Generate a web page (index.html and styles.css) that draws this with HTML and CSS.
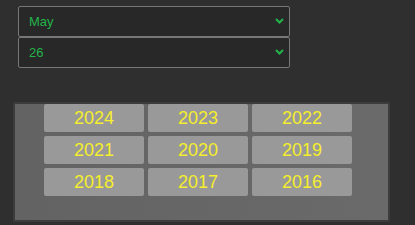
FILE: index.html
```html
<!DOCTYPE html>
<html lang="en">
<head>
<meta charset="utf-8">
<title>Date picker</title>
<link rel="stylesheet" href="styles.css">
</head>
<body>
<div class="pickers">
	<div class="dropdown">
		<span class="value">May</span>
		<svg class="chevron" width="9" height="6" viewBox="0 0 9 6"><path d="M1 1 L4.5 4.5 L8 1" fill="none" stroke="#22b44a" stroke-width="2"/></svg>
	</div>
	<div class="dropdown">
		<span class="value">26</span>
		<svg class="chevron" width="9" height="6" viewBox="0 0 9 6"><path d="M1 1 L4.5 4.5 L8 1" fill="none" stroke="#22b44a" stroke-width="2"/></svg>
	</div>
</div>

<div class="yearbox">
	<div class="yeargrid">
		<div class="year">2024</div>
		<div class="year">2023</div>
		<div class="year">2022</div>
		<div class="year">2021</div>
		<div class="year">2020</div>
		<div class="year">2019</div>
		<div class="year">2018</div>
		<div class="year">2017</div>
		<div class="year">2016</div>
	</div>
</div>
</body>
</html>
```

FILE: styles.css
```css
body {
	margin: 0;
	background: #2f2f2f;
	font-family: "Liberation Sans", Arial, sans-serif;
	width: 415px;
	height: 225px;
	overflow: hidden;
}
.pickers {
	padding: 6px 0 0 18px;
	width: 272px;
}
.dropdown {
	display: flex;
	align-items: center;
	justify-content: space-between;
	box-sizing: border-box;
	height: 31px;
	padding: 0 5px 0 10px;
	background: #282828;
	border: 1px solid #777;
	border-radius: 2px;
	color: #22b44a;
	font-size: 13px;
}
.chevron {
	margin-top: -1px;
}
.yearbox {
	box-sizing: border-box;
	margin: 34px 0 0 13px;
	width: 377px;
	height: 120px;
	padding: 0 0 0 29px;
	background: linear-gradient(to right, #636363, #6a6a6a);
	border: 2px solid #3c3c3c;
	border-radius: 2px;
}
.yeargrid {
	display: grid;
	grid-template-columns: repeat(3, 100px);
	gap: 4px;
}
.year {
	height: 28px;
	line-height: 28px;
	text-align: center;
	background: #999;
	border-radius: 2px;
	color: #f5ee2c;
	font-size: 18px;
}
```
